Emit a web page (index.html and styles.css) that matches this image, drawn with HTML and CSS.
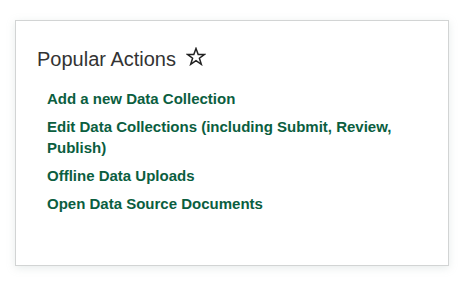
FILE: index.html
```html
<html>
    <head>
        <meta name="viewport" content="width=device-width, initial-scale=1">
        <link rel="stylesheet" href="styles.css">
    </head>
    <body>
        <div class='card'>
            <div class='card-title'>
                Popular Actions
                <svg class='star' width='20' height='19' viewBox='0 0 20 19'>
                    <polygon points='10,1.5 12.2,7.4 18.5,7.4 13.4,11.2 15.3,17.3 10,13.6 4.7,17.3 6.6,11.2 1.5,7.4 7.8,7.4' fill='none' stroke='#222' stroke-width='1.5' stroke-linejoin='miter'/>
                </svg>
            </div>
            <ul class='actions'>
                <li><a href='#'>Add a new Data Collection</a></li>
                <li><a href='#'>Edit Data Collections (including Submit, Review, Publish)</a></li>
                <li><a href='#'>Offline Data Uploads</a></li>
                <li><a href='#'>Open Data Source Documents</a></li>
            </ul>
        </div>
    </body>
</html>
```

FILE: styles.css
```css
body {
    margin: 0;
    padding: 20px 16px 0 15px;
    background: white;
    font-family: "Liberation Sans", Arial, sans-serif;
}
.card {
    width: 434px;
    height: 246px;
    border: 1px solid #d2d4d4;
    box-shadow: 0 2px 8px rgba(160, 180, 175, 0.25);
    padding: 26px 21px 0 21px;
    box-sizing: border-box;
}
.card-title {
    font-size: 20px;
    line-height: 24px;
    color: #333;
    display: flex;
    align-items: center;
    gap: 10px;
}
.star {
    margin-top: -5px;
}
.actions {
    list-style: none;
    margin: 17px 0 0 0;
    padding: 0 0 0 10px;
}
.actions li {
    margin-bottom: 7px;
    font-size: 15px;
    line-height: 21px;
    font-weight: bold;
}
.actions a {
    color: #0b5e3f;
    text-decoration: none;
}
```
